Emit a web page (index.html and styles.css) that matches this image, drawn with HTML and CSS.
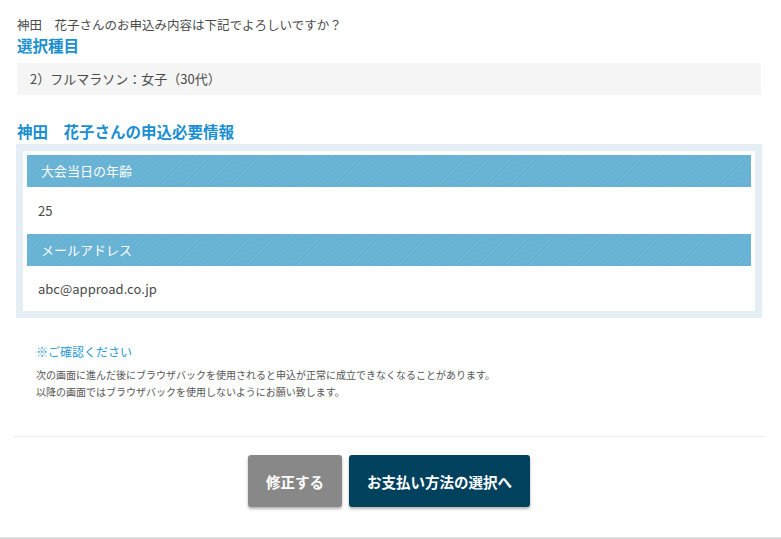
FILE: index.html
```html
<!DOCTYPE html>
<html lang="ja">
<head>
  <meta charset="UTF-8" />
  <meta name="viewport" content="width=device-width, initial-scale=1" />
  <title>お申込み内容の確認</title>
  <link rel="stylesheet" href="styles.css">
</head>
<body>
  <div class="wrap">
    <p class="intro">神田　花子さんのお申込み内容は下記でよろしいですか？</p>
    <h2 class="ttl">選択種目</h2>
    <div class="course">2）フルマラソン：女子（30代）</div>

    <h2 class="ttl ttl-info">神田　花子さんの申込必要情報</h2>
    <div class="info">
      <dl class="info-list">
        <dt>大会当日の年齢</dt>
        <dd>25</dd>
        <dt>メールアドレス</dt>
        <dd>abc@approad.co.jp</dd>
      </dl>
    </div>

    <div class="note">
      <p class="note-ttl">※ご確認ください</p>
      <p class="note-txt">次の画面に進んだ後にブラウザバックを使用されると申込が正常に成立できなくなることがあります。<br>以降の画面ではブラウザバックを使用しないようにお願い致します。</p>
    </div>
  </div>

  <div class="actions">
    <button type="button" class="btn btn-back">修正する</button>
    <button type="button" class="btn btn-next">お支払い方法の選択へ</button>
  </div>
  <div class="footer-line"></div>
</body>
</html>
```

FILE: styles.css
```css
body {
  margin: 0;
  font-family: "Noto Sans CJK JP", "Noto Sans", sans-serif;
  color: #4a4a4a;
  background: #fff;
}
p, h2, dl, dd { margin: 0; }

.wrap { padding: 16px 20px 0 17px; }

.intro { font-size: 12.5px; line-height: 18px; }

.ttl {
  font-size: 15.5px; line-height: 22px;
  font-weight: bold; color: #1a8fd2;
}
.ttl-info { margin-top: 25px; }

.course {
  margin-top: 7px; padding-left: 13px;
  height: 32px; line-height: 32px;
  font-size: 13px; background: #f5f5f5;
}

.info {
  margin: 2px -1px 0 -1px;
  border: 7px solid #e4eef4;
  padding: 4px 4px 0;
}
.info-list dt {
  height: 32px; line-height: 32px; padding-left: 14px;
  font-size: 13px; color: #fff;
  background: repeating-linear-gradient(135deg, #6ab4d6 0, #6ab4d6 2px, #66b1d4 2px, #66b1d4 4px);
}
.info-list dd {
  height: 47px; line-height: 47px; padding-left: 11px;
  font-size: 13px; color: #4a4a4a;
}
.info-list dd:last-child { height: 45px; line-height: 45px; }

.note { padding: 24px 0 0 19px; }
.note-ttl { font-size: 12px; line-height: 20px; color: #2a9bd8; }
.note-txt { margin-top: 4px; font-size: 10px; line-height: 17px; color: #555; }

.actions {
  margin: 36px 16px 0 13px;
  border-top: 1px solid #eee;
  padding: 18px 0 30px;
  display: flex; justify-content: center; gap: 7px;
}
.btn {
  height: 52px; padding: 0 18px;
  border: none; border-radius: 3px;
  font-family: inherit; font-size: 14.5px; font-weight: bold; color: #fff;
  box-shadow: 0 2px 3px rgba(0, 0, 0, 0.3);
  cursor: pointer;
}
.btn-back { background: #888; }
.btn-next { background: #00415e; }

.footer-line { height: 2px; background: #ddd; }
```
